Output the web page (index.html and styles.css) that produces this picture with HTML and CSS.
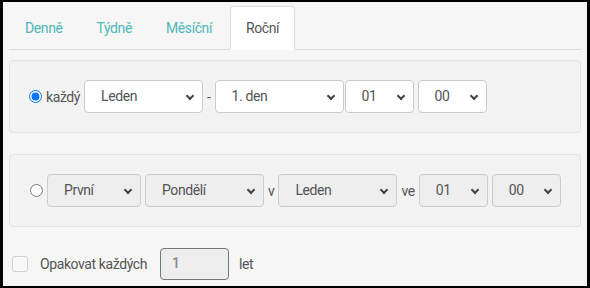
FILE: index.html
```html
<!DOCTYPE html>
<html lang="cs">
<head>
  <meta charset="UTF-8">
  <meta name="viewport" content="width=device-width, initial-scale=1.0">
  <title>Opakování</title>
  <link rel="stylesheet" href="styles.css">
</head>
<body>
  <div class="frame">
    <ul class="tabs">
      <li><a href="#">Denně</a></li>
      <li><a href="#">Týdně</a></li>
      <li><a href="#">Měsíční</a></li>
      <li class="active"><a href="#">Roční</a></li>
    </ul>

    <div class="panel">
      <input type="radio" name="mode" class="radio" checked>
      <span class="word">každý</span>
      <div class="select w119">Leden</div>
      <span class="word">-</span>
      <div class="select w129">1. den</div>
      <div class="select w69 tight">01</div>
      <div class="select w69">00</div>
    </div>

    <div class="panel panel-off">
      <input type="radio" name="mode" class="radio">
      <div class="select w94 off">První</div>
      <div class="select w119 off">Pondělí</div>
      <span class="word">v</span>
      <div class="select w119 off">Leden</div>
      <span class="word">ve</span>
      <div class="select w69 off">01</div>
      <div class="select w69 off">00</div>
    </div>

    <div class="repeat">
      <span class="check"></span>
      <span class="label">Opakovat každých</span>
      <div class="years">1</div>
      <span class="label unit">let</span>
    </div>
  </div>
</body>
</html>
```

FILE: styles.css
```css
* {
  box-sizing: border-box;
}
html {
  font-family: 'Roboto', 'Liberation Sans', sans-serif;
  font-size: 14px;
  letter-spacing: -0.4px;
}
body {
  margin: 0;
  background: #000;
}
.frame {
  margin: 2px 3px;
  height: 284px;
  background: #f6f6f6;
  padding: 4px 6px 0;
}

/* tabs */
.tabs {
  display: flex;
  list-style: none;
  margin: 0;
  padding: 0;
  border-bottom: 1px solid #dddddd;
}
.tabs li {
  margin-bottom: -1px;
  margin-right: 2px;
}
.tabs a {
  display: block;
  padding: 10px 15px;
  line-height: 22px;
  border: 1px solid transparent;
  border-radius: 4px 4px 0 0;
  color: #4fb7b9;
  text-decoration: none;
}
.tabs .active a {
  background: #fff;
  border-color: #dddddd;
  border-bottom-color: #fff;
  color: #555;
}

/* panels */
.panel {
  display: flex;
  align-items: center;
  gap: 4px;
  margin-top: 10px;
  padding: 19px;
  background: #f3f3f3;
  border: 1px solid #e3e3e3;
  border-radius: 4px;
}
.panel-off {
  margin-top: 21px;
}
.radio {
  width: 13px;
  height: 13px;
  margin: 0;
  accent-color: #0075ff;
}
.panel-off .radio {
  margin-left: 1px;
}
.word {
  color: #555;
}
.select {
  position: relative;
  height: 33px;
  line-height: 31px;
  padding-left: 16px;
  border: 1px solid #cccccc;
  border-radius: 4px;
  background: #fff;
  color: #555;
}
.select::after {
  content: "";
  position: absolute;
  right: 9px;
  top: 12px;
  width: 4px;
  height: 4px;
  border-right: 2px solid #444;
  border-bottom: 2px solid #444;
  transform: rotate(45deg);
}
.select.off {
  background: #eeeeee;
}
.w69 { width: 69px; }
.w94 { width: 94px; }
.w119 { width: 119px; }
.w129 { width: 129px; }
.tight {
  margin-left: -3px;
}

/* repeat row */
.repeat {
  display: flex;
  align-items: center;
  margin-top: 21px;
  padding-left: 3px;
  color: #555;
}
.check {
  width: 16px;
  height: 16px;
  border: 1px solid #cfcfcf;
  border-radius: 3px;
  background: #f9f9f9;
  margin-right: 12px;
}
.years {
  width: 69px;
  height: 32px;
  margin-left: 13px;
  padding: 5px 0 0 11px;
  border: 1px solid #777;
  border-radius: 4px;
  background: #eeeeee;
  color: #8a8a8a;
  font-weight: 500;
  line-height: 18px;
}
.unit {
  margin-left: 10px;
}
```
